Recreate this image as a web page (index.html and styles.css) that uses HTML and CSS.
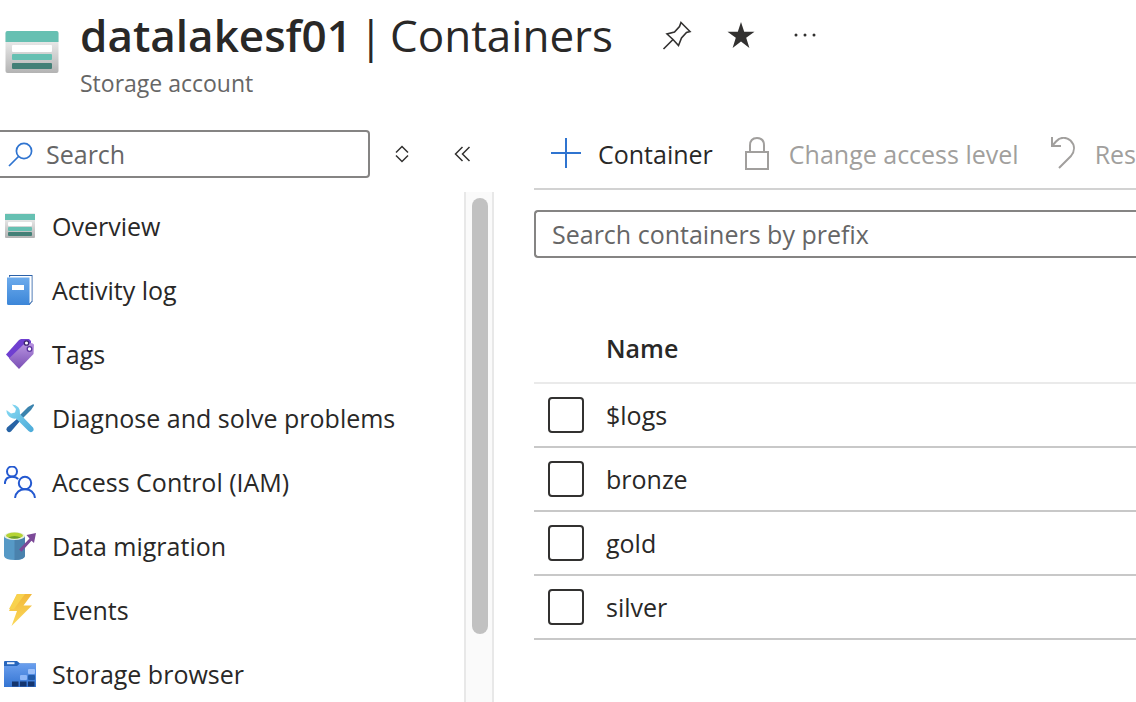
FILE: index.html
```html
<!DOCTYPE html>
<html lang="en">
<head>
<meta charset="utf-8">
<meta name="viewport" content="width=device-width, initial-scale=1">
<title>datalakesf01 | Containers</title>
<link rel="stylesheet" href="styles.css">
</head>
<body>
<svg class="defs" aria-hidden="true">
  <defs>
    <linearGradient id="g-card" x1="0" y1="0" x2="0" y2="1"><stop offset="0.2" stop-color="#ebebeb"/><stop offset="1" stop-color="#b3b3b3"/></linearGradient>
    <linearGradient id="g-book" x1="0" y1="0" x2="0" y2="1"><stop offset="0" stop-color="#6cabec"/><stop offset="1" stop-color="#3c86d8"/></linearGradient>
    <linearGradient id="g-tag" x1="0" y1="0" x2="0" y2="1"><stop offset="0" stop-color="#b894e0"/><stop offset="1" stop-color="#7a4fb5"/></linearGradient>
    <linearGradient id="g-wrench" x1="0" y1="0" x2="1" y2="1"><stop offset="0" stop-color="#8adcf4"/><stop offset="1" stop-color="#4aa9d8"/></linearGradient>
    <linearGradient id="g-bolt" x1="0" y1="0" x2="0" y2="1"><stop offset="0" stop-color="#f2b83a"/><stop offset="1" stop-color="#fbd95a"/></linearGradient>
    <linearGradient id="g-folder" x1="0" y1="0" x2="0" y2="1"><stop offset="0" stop-color="#6a9fee"/><stop offset="1" stop-color="#3474d2"/></linearGradient>
    <symbol id="storage" viewBox="0 0 54 44">
      <rect x="0.5" y="1" width="53" height="42" rx="2" fill="url(#g-card)"/>
      <path d="M0.5 12V3a2 2 0 0 1 2-2h49a2 2 0 0 1 2 2v9z" fill="#66c0b2"/>
      <rect x="7" y="15" width="40" height="7" rx="1" fill="#fff"/>
      <rect x="7" y="24" width="40" height="6" rx="1" fill="#66c0b2"/>
      <rect x="7" y="33" width="40" height="6" rx="1" fill="#438077"/>
    </symbol>
  </defs>
</svg>

<header class="header">
  <svg class="header-icon" aria-hidden="true"><use href="#storage"/></svg>
  <div class="header-text">
    <div class="title-row">
      <h1 class="title"><strong>datalakesf01</strong> <span>|</span> <span>Containers</span></h1>
      <div class="title-actions">
        <button type="button" class="icon-button" aria-label="Pin">
          <svg width="32" height="32" viewBox="0 0 32 32" fill="none" stroke="#323130" stroke-width="1.6" stroke-linejoin="miter"><path d="M20 3.5 29 12.5 25.5 13.5 20.5 19 17.5 26.500 12 20.500 6 15 13.500 13 18.500 7.500zM12 20.500 2.500 30"/></svg>
        </button>
        <button type="button" class="icon-button" aria-label="Remove from favorites">
          <svg width="32" height="32" viewBox="0 0 32 32"><path d="M16 3 19.200 12.800H29.500L21.200 18.800 24.400 29 16 22.600 7.600 29 10.800 18.800 2.500 12.800H12.800z" fill="#323130"/></svg>
        </button>
        <button type="button" class="icon-button" aria-label="More actions">
          <svg width="32" height="32" viewBox="0 0 32 32" fill="#323130"><circle cx="7" cy="16" r="1.500"/><circle cx="16" cy="16" r="1.500"/><circle cx="25" cy="16" r="1.500"/></svg>
        </button>
      </div>
    </div>
    <p class="subtitle">Storage account</p>
  </div>
</header>

<div class="body">
  <aside class="sidebar">
    <div class="sidebar-tools">
      <label class="menu-search">
        <svg width="26" height="26" viewBox="0 0 26 26" fill="none" stroke="#2f74d0" stroke-width="1.700"><circle cx="16" cy="10" r="7.600"/><path d="M10.500 15.500 1 25"/></svg>
        <input type="search" placeholder="Search" aria-label="Search menu">
      </label>
      <button type="button" class="icon-button" aria-label="Expand or collapse all">
        <svg width="32" height="32" viewBox="0 0 32 32" fill="none" stroke="#323130" stroke-width="1.500"><path d="M10 14.500 16 8.500 22 14.500M10 17.500 16 23.500 22 17.500"/></svg>
      </button>
      <button type="button" class="icon-button collapse" aria-label="Collapse menu">
        <svg width="32" height="32" viewBox="0 0 32 32" fill="none" stroke="#323130" stroke-width="1.500"><path d="M16.500 9 9.500 16 16.500 23M23.500 9 16.500 16 23.500 23"/></svg>
      </button>
    </div>
    <div class="menu-scroll">
      <nav class="menu" aria-label="Storage account">
        <a class="menu-item" href="#overview">
          <svg class="menu-icon" viewBox="0 0 32 32" aria-hidden="true"><rect x="1" y="3" width="30" height="25" rx="1" fill="url(#g-card)"/><path d="M1 4h30v6H1z" fill="#66c0b2"/><rect x="4" y="12" width="24" height="4" rx="1" fill="#fff"/><rect x="4" y="17" width="24" height="4" rx="1" fill="#66c0b2"/><rect x="4" y="22" width="24" height="4" rx="1" fill="#438077"/></svg>
          Overview</a>
        <a class="menu-item" href="#activity">
          <svg class="menu-icon" viewBox="0 0 32 32" aria-hidden="true"><path d="M5 1h23.500v26.500L25.500 31H5z" fill="#2b61a8"/><path d="M5 3.200 6.500 2H27.700v25L25.500 29.500z" fill="#fff"/><path d="M3 3.500h22.500V31H4.500A1.500 1.500 0 0 1 3 29.500z" fill="url(#g-book)"/><rect x="8" y="11" width="12" height="5" fill="#fff"/></svg>
          Activity log</a>
        <a class="menu-item" href="#tags">
          <svg class="menu-icon" viewBox="0 0 32 32" aria-hidden="true"><path d="M2 16.500 15 2 17 1H25L27 3V10L9 24z" fill="#6f3fd0"/><path d="M5 20.500 19.500 6.500 28 5 30 6.500 29.500 16 15 31z" fill="url(#g-tag)"/><circle cx="22.500" cy="5" r="2.200" fill="#fff" stroke="#3d2470" stroke-width="1.300"/><circle cx="25.500" cy="11" r="2.300" fill="#fff" stroke="#5c359e" stroke-width="1.300"/></svg>
          Tags</a>
        <a class="menu-item" href="#diagnose">
          <svg class="menu-icon" viewBox="0 0 32 32" aria-hidden="true"><path d="M29.500 2 30 3.500 27 8 17 18 14 15 24 5z" fill="#3b83ae"/><path d="M13.500 16.500 16 19 7 29.500Q5 31 3.300 29.300 1.500 27.500 3 25.500z" fill="#2763a5"/><path d="M8 2.500A8 8 0 0 1 16 12L29 25.500Q30.500 28 28.500 29.500 26.500 31 24.500 29L12 16.500A8 8 0 0 1 2.500 8L7 11.500 11 10.500 12 7z" fill="url(#g-wrench)"/></svg>
          Diagnose and solve problems</a>
        <a class="menu-item" href="#iam">
          <svg class="menu-icon" viewBox="0 0 32 32" aria-hidden="true" fill="none" stroke="#2459d0" stroke-width="2"><circle cx="8" cy="5.500" r="5"/><path d="M.800 18C1 13 4 10.800 8 10.800Q12 10.800 14.200 13"/><circle cx="21" cy="17" r="6.200"/><path d="M11 32C12 26 15.500 23.300 21 23.300S30 26 31 32"/></svg>
          Access Control (IAM)</a>
        <a class="menu-item" href="#migration">
          <svg class="menu-icon" viewBox="0 0 32 32" aria-hidden="true"><path d="M0 6V26Q1 30 10.500 30T21 26V6z" fill="#5699c6"/><path d="M10.500 7H21V26Q20 30 10.500 30z" fill="#4a82ad"/><ellipse cx="10.500" cy="6" rx="10.500" ry="4" fill="#e9efe0"/><ellipse cx="10.500" cy="5.500" rx="8.500" ry="3" fill="#b5d334"/><path d="M4 7.500Q10.500 4.500 17 7.500 10.500 10 4 7.500" fill="#6d9f2b"/><path d="M15 19.500 25.500 8.500 22.500 5 32 3 30 13 27.500 10.800 17.500 21.800z" fill="#7c4a98"/></svg>
          Data migration</a>
        <a class="menu-item" href="#events">
          <svg class="menu-icon" viewBox="0 0 32 32" aria-hidden="true"><path d="M13 0H28L19.500 11.500H28L7.500 32 13 17H5z" fill="url(#g-bolt)"/><path d="M13 0H21L10 15H5z" fill="#f8d24e"/></svg>
          Events</a>
        <a class="menu-item" href="#browser">
          <svg class="menu-icon" viewBox="0 0 32 32" aria-hidden="true"><path d="M0 4Q0 3 1 3H13L16 5.500H32V14H0z" fill="#2766bd"/><rect x="3" y="4.200" width="7.500" height="2" fill="#e8f1ff"/><path d="M0 8H13L16 5.500H32V29H0z" fill="url(#g-folder)"/><rect x="24" y="11" width="7" height="5" rx="1" fill="#9cc0fa"/><rect x="16" y="17" width="7" height="5" rx="1" fill="#8fb7f7"/><rect x="24" y="17" width="7" height="5" rx="1" fill="#225aa8"/><path d="M8 23.500h6.500v5H8zM16 23.500h6.500v5H16zM24 23.500h6.500v5H24z" fill="#14356e"/></svg>
          Storage browser</a>
      </nav>
      <div class="scrollbar" aria-hidden="true"><div class="scroll-thumb"></div></div>
    </div>
  </aside>

  <main class="content">
    <div class="toolbar">
      <button type="button" class="command">
        <svg width="32" height="34" viewBox="0 0 32 34" stroke="#2f74d0" stroke-width="2" aria-hidden="true"><path d="M1 16H31M16 1V31"/></svg>
        Container</button>
      <button type="button" class="command" disabled>
        <svg width="32" height="34" viewBox="0 0 32 34" fill="none" stroke="#a19f9d" stroke-width="2" aria-hidden="true"><path d="M5 15H27V32H5zM9 15V8.500Q9 1 16 1T23 8.500V15"/></svg>
        Change access level</button>
      <button type="button" class="command" disabled>
        <svg width="32" height="34" viewBox="0 0 32 34" fill="none" stroke="#a19f9d" stroke-width="2" aria-hidden="true"><path d="M5 0V9H14M5 9 9 4.500C14 -1 20 .5 23.500 3.500 28 8 28 14 24 19L12 31"/></svg>
        Restore containers</button>
    </div>
    <input class="prefix-search" type="search" placeholder="Search containers by prefix" aria-label="Search containers by prefix">
    <table class="containers">
      <thead>
        <tr><th class="check"></th><th scope="col">Name</th></tr>
      </thead>
      <tbody>
        <tr><td class="check"><input type="checkbox" id="c-logs"></td><td><label for="c-logs">$logs</label></td></tr>
        <tr><td class="check"><input type="checkbox" id="c-bronze"></td><td><label for="c-bronze">bronze</label></td></tr>
        <tr><td class="check"><input type="checkbox" id="c-gold"></td><td><label for="c-gold">gold</label></td></tr>
        <tr><td class="check"><input type="checkbox" id="c-silver"></td><td><label for="c-silver">silver</label></td></tr>
      </tbody>
    </table>
  </main>
</div>
</body>
</html>
```
FILE: styles.css
```css
* {
  box-sizing: border-box;
}

body {
  display: flex;
  flex-direction: column;
  height: 100vh;
  margin: 0;
  overflow: hidden;
  background: #fff;
  color: #292827;
  font-family: "Open Sans", "Noto Sans", sans-serif;
  font-size: 25px;
  line-height: 32px;
}

button,
input {
  color: inherit;
  font: inherit;
}

svg {
  flex: none;
}

.defs {
  position: absolute;
  width: 0;
  height: 0;
}

.header {
  display: flex;
  gap: 21px;
  padding: 3px 0 0 5px;
}

.header-icon {
  width: 54px;
  height: 44px;
  margin-top: 27px;
}

.title-row {
  display: flex;
  align-items: center;
  gap: 48px;
}

.title {
  display: flex;
  gap: 7px;
  margin: 0;
  font-size: 44px;
  font-weight: 400;
  line-height: 64px;
  white-space: nowrap;
}

.title strong {
  font-weight: 600;
}

.title-actions {
  display: flex;
  gap: 32px;
}

.icon-button {
  display: flex;
  padding: 0;
  border: 0;
  background: none;
}

.subtitle {
  margin: 0;
  color: #666;
  font-size: 23px;
}

.body {
  display: flex;
  flex: 1;
  gap: 40px;
  min-height: 0;
  padding-top: 25px;
}

.sidebar {
  display: flex;
  flex: none;
  flex-direction: column;
  gap: 14px;
  width: 494px;
}

.sidebar-tools {
  display: flex;
  align-items: center;
  gap: 16px;
  padding-top: 6px;
}

.menu-search {
  display: flex;
  align-items: center;
  gap: 12px;
  width: 370px;
  height: 48px;
  padding: 0 8px;
  border: 2px solid #858483;
  border-left: 0;
  border-radius: 0 4px 4px 0;
}

.menu-search input {
  flex: 1;
  min-width: 0;
  padding: 0;
  border: 0;
  outline: 0;
  background: none;
}

input::placeholder {
  color: #666;
  opacity: 1;
}

.collapse {
  margin-left: 12px;
}

.menu-scroll {
  display: flex;
  flex: 1;
  min-height: 0;
}

.menu {
  flex: 1;
  padding-top: 2px;
  overflow: hidden;
}

.menu-item {
  display: flex;
  align-items: center;
  gap: 16px;
  height: 64px;
  padding-left: 4px;
  color: inherit;
  text-decoration: none;
  white-space: nowrap;
}

.menu-icon {
  width: 32px;
  height: 32px;
}

.scrollbar {
  width: 30px;
  padding: 6px;
  border: solid #e8e8e8;
  border-width: 0 2px;
  background: #fafafa;
}

.scroll-thumb {
  width: 16px;
  height: calc(100% - 62px);
  border-radius: 8px;
  background: #c1c1c1;
}

.content {
  flex: 1;
  min-width: 0;
}

.toolbar {
  display: flex;
  gap: 28px;
  height: 66px;
  padding: 6px 0 0 16px;
  overflow: hidden;
  border-bottom: 2px solid #d2d2d2;
}

.command {
  display: flex;
  flex: none;
  align-items: center;
  gap: 16px;
  padding: 0 0 10px;
  border: 0;
  background: none;
  white-space: nowrap;
}

.command:disabled {
  color: #a19f9d;
}

.prefix-search {
  display: block;
  width: 100%;
  height: 48px;
  margin: 20px 0 56px;
  padding: 0 16px;
  border: 2px solid #858483;
  border-right: 0;
  border-radius: 4px 0 0 4px;
  outline: 0;
  background: none;
}

.containers {
  width: 100%;
  border-spacing: 0;
}

.containers th,
.containers td {
  height: 64px;
  padding: 0;
  border-bottom: 2px solid #c8c8c8;
  text-align: left;
}

.containers th {
  height: 70px;
  border-color: #eaeaea;
  font-weight: 600;
}

.containers .check {
  width: 72px;
  padding-left: 14px;
}

.containers input {
  display: block;
  width: 36px;
  height: 36px;
  margin: 0;
  border: 2px solid #323130;
  border-radius: 4px;
  appearance: none;
}
```
